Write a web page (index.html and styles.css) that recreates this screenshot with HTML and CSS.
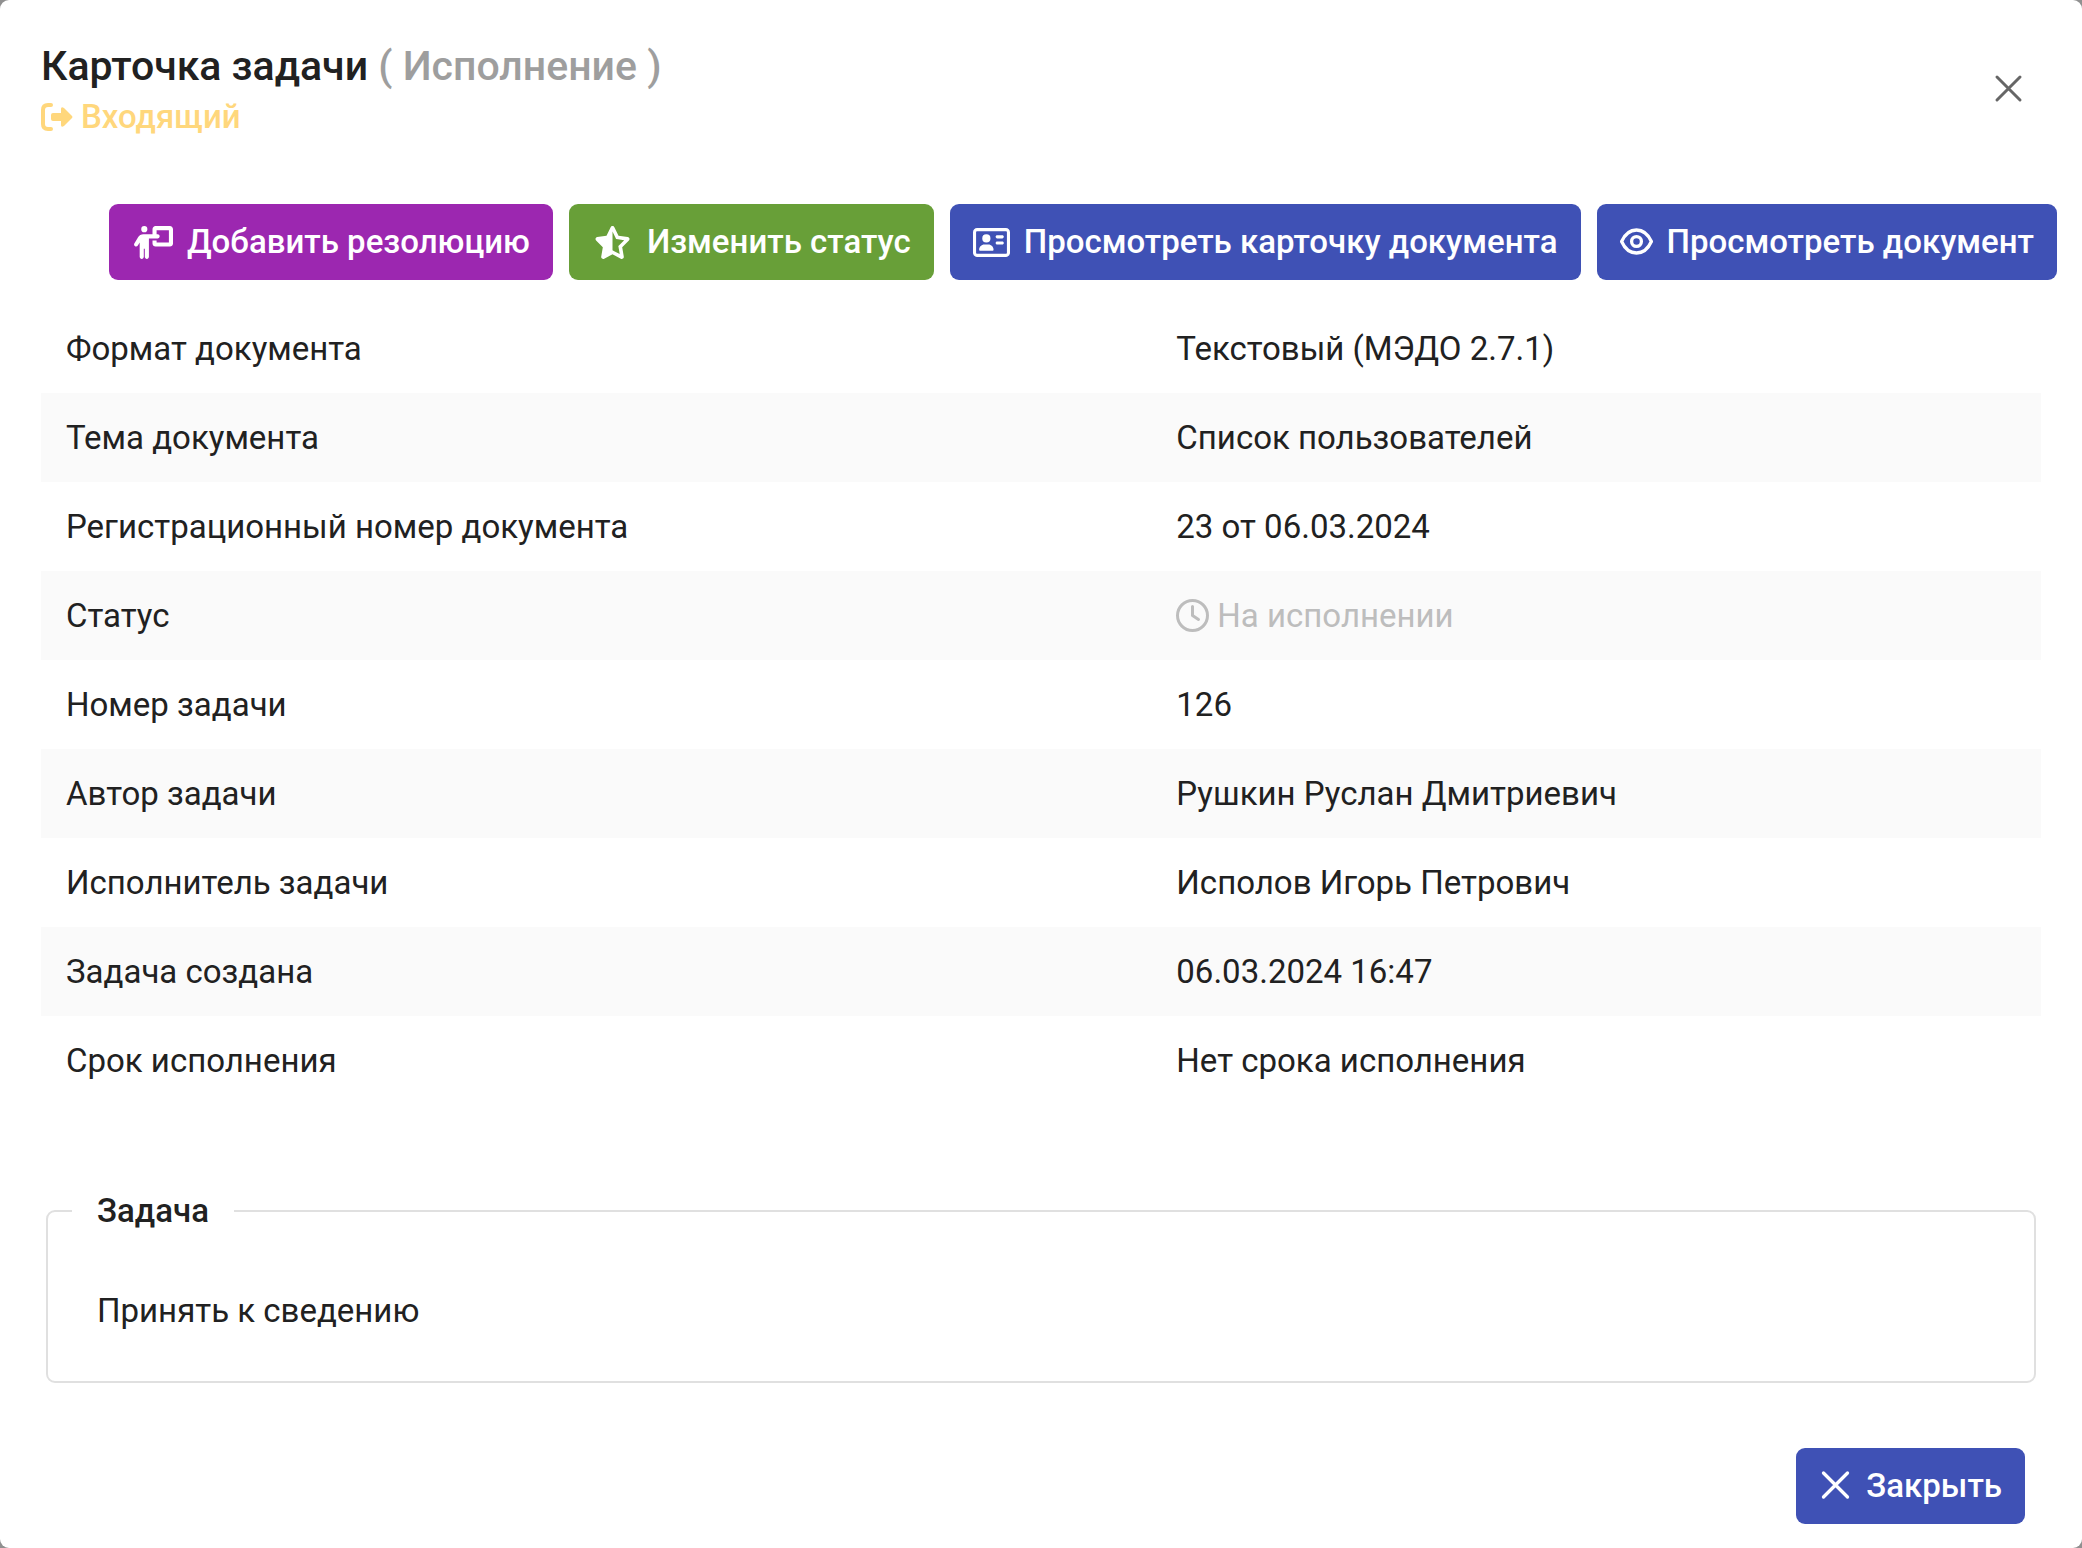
FILE: index.html
```html
<!DOCTYPE html>
<html lang="ru">
<head>
<meta charset="utf-8">
<meta name="viewport" content="width=device-width, initial-scale=1">
<title>Карточка задачи</title>
<link rel="stylesheet" href="styles.css">
</head>
<body>
<main class="dialog" role="dialog" aria-labelledby="dialog-title">
  <header class="dialog-header">
    <div>
      <h1 class="title" id="dialog-title">Карточка задачи <span class="title-kind">( Исполнение )</span></h1>
      <p class="direction">
        <svg class="icon-direction" viewBox="0 0 32 28" aria-hidden="true"><path d="M10 2H7Q2 2 2 7V21Q2 26 7 26H10" fill="none" stroke="currentColor" stroke-width="4" stroke-linecap="round"/><path d="M12 10H20V6Q20 3 23 5L31 13Q32 14 31 15L23 23Q20 25 20 22V18H12Q10 18 10 16V12Q10 10 12 10Z" fill="currentColor"/></svg>
        Входящий
      </p>
    </div>
    <button class="icon-button" type="button" aria-label="Закрыть окно">
      <svg class="icon" viewBox="0 0 33 33" aria-hidden="true"><path d="M5 5L28 28M28 5L5 28" fill="none" stroke="currentColor" stroke-width="3" stroke-linecap="round"/></svg>
    </button>
  </header>

  <div class="toolbar">
    <button class="button button-purple" type="button">
      <svg class="icon icon-wide" viewBox="0 0 640 512" aria-hidden="true"><path fill="currentColor" d="M192 96a48 48 0 1 0 0-96 48 48 0 1 0 0 96zm-8 384V352h16V480c0 17.700 14.300 32 32 32s32-14.300 32-32V192h56 64 16c17.700 0 32-14.300 32-32s-14.300-32-32-32H384V64H576V256H384V224H320v48c0 26.500 21.500 48 48 48H592c26.500 0 48-21.500 48-48V48c0-26.500-21.500-48-48-48H368c-26.500 0-48 21.500-48 48v80H243.100 177.100c-33.700 0-64.900 17.700-82.300 46.600l-58.300 97c-9.100 15.100-4.200 34.800 10.900 43.900s34.800 4.200 43.900-10.900L120 256.900V480c0 17.700 14.300 32 32 32s32-14.300 32-32z"/></svg>
      Добавить резолюцию
    </button>
    <button class="button button-green" type="button">
      <svg class="icon icon-wide" viewBox="0 0 576 512" aria-hidden="true"><path fill="currentColor" d="M288 376.400l.1-.1 26.400 14.100 85.200 45.500-16.500-97.600-4.800-28.700 20.700-20.500 70.100-69.300-96.100-14.200-29.300-4.300-12.900-26.600L288.100 86.900l-.1 .3V376.400zm175.100 98.300c2 12-3 24.200-12.900 31.300s-23 8-33.800 2.300L288.100 439.800 159.800 508.300C149 514 135.900 513.100 126 506s-14.900-19.300-12.900-31.300L137.800 329 33.600 225.900c-8.600-8.500-11.700-21.200-7.900-32.700s13.700-19.900 25.700-21.700L195 150.300 259.400 18c5.400-11 16.500-18 28.800-18s23.400 7 28.800 18l64.300 132.300 143.600 21.200c12 1.800 22 10.200 25.700 21.700s.7 24.200-7.900 32.700L438.500 329l24.600 145.700z"/></svg>
      Изменить статус
    </button>
    <button class="button" type="button">
      <svg class="icon icon-card" viewBox="0 0 576 512" aria-hidden="true"><path fill="currentColor" d="M512 80c8.800 0 16 7.200 16 16V416c0 8.800-7.200 16-16 16H64c-8.800 0-16-7.200-16-16V96c0-8.800 7.200-16 16-16H512zM64 32C28.700 32 0 60.700 0 96V416c0 35.300 28.700 64 64 64H512c35.300 0 64-28.700 64-64V96c0-35.300-28.700-64-64-64H64zM208 256a64 64 0 1 0 0-128 64 64 0 1 0 0 128zm-32 32c-44.200 0-80 35.800-80 80c0 8.800 7.200 16 16 16H304c8.800 0 16-7.200 16-16c0-44.200-35.800-80-80-80H176zM376 144c-13.300 0-24 10.700-24 24s10.700 24 24 24h80c13.300 0 24-10.700 24-24s-10.700-24-24-24H376zm0 96c-13.300 0-24 10.700-24 24s10.700 24 24 24h80c13.300 0 24-10.700 24-24s-10.700-24-24-24H376z"/></svg>
      Просмотреть карточку документа
    </button>
    <button class="button" type="button">
      <svg class="icon" viewBox="0 0 33 33" aria-hidden="true"><g fill="none" stroke="currentColor" stroke-width="3.300" stroke-linejoin="round"><path d="M1.600 15.500C5 8 10 4 16.500 4S28 8 31.400 15.500C28 23 23 27 16.500 27S5 23 1.600 15.500Z"/><circle cx="16.500" cy="15.500" r="4.900"/></g></svg>
      Просмотреть документ
    </button>
  </div>

  <table class="details">
    <tbody>
      <tr><th scope="row">Формат документа</th><td>Текстовый (МЭДО 2.7.1)</td></tr>
      <tr><th scope="row">Тема документа</th><td>Список пользователей</td></tr>
      <tr><th scope="row">Регистрационный номер документа</th><td>23 от 06.03.2024</td></tr>
      <tr><th scope="row">Статус</th><td><span class="status"><svg class="icon" viewBox="0 0 33 33" aria-hidden="true"><g fill="none" stroke="currentColor" stroke-width="3" stroke-linecap="round" stroke-linejoin="round"><circle cx="16.500" cy="16.500" r="15"/><path d="M16.500 7.500V16.500L22.500 20.500"/></g></svg>На исполнении</span></td></tr>
      <tr><th scope="row">Номер задачи</th><td>126</td></tr>
      <tr><th scope="row">Автор задачи</th><td>Рушкин Руслан Дмитриевич</td></tr>
      <tr><th scope="row">Исполнитель задачи</th><td>Исполов Игорь Петрович</td></tr>
      <tr><th scope="row">Задача создана</th><td>06.03.2024 16:47</td></tr>
      <tr><th scope="row">Срок исполнения</th><td>Нет срока исполнения</td></tr>
    </tbody>
  </table>

  <fieldset class="task">
    <legend>Задача</legend>
    <p class="task-text">Принять к сведению</p>
  </fieldset>

  <footer class="dialog-footer">
    <button class="button" type="button">
      <svg class="icon" viewBox="0 0 33 33" aria-hidden="true"><path d="M4.500 3L28.500 27M28.500 3L4.500 27" fill="none" stroke="currentColor" stroke-width="3.300" stroke-linecap="round"/></svg>
      Закрыть
    </button>
  </footer>
</main>
</body>
</html>
```
FILE: styles.css
```css
* {
  box-sizing: border-box;
}

body {
  margin: 0;
  background: #909090;
  color: #212121;
  font-family: Roboto, "Noto Sans", sans-serif;
  font-size: 33px;
  line-height: 40px;
}

.dialog {
  display: flex;
  flex-direction: column;
  min-height: 100vh;
  background: #fff;
  border-radius: 9px;
}

.dialog-header {
  display: flex;
  justify-content: space-between;
  align-items: flex-start;
  padding: 40px 41px 0;
}

.title {
  margin: 0;
  font-size: 41px;
  font-weight: 500;
  line-height: 52px;
}

.title-kind {
  color: #9e9e9e;
}

.direction {
  display: flex;
  align-items: center;
  gap: 8px;
  margin: 5px 0 0;
  color: #ffd77c;
  font-weight: 500;
}

.icon-direction {
  width: 32px;
  height: 28px;
}

.icon {
  flex: none;
  width: 33px;
  height: 33px;
}

.icon-wide {
  width: 41px;
}

.icon-card {
  width: 37px;
}

.icon-button {
  display: flex;
  margin: 24px 8px 0 0;
  padding: 8px;
  border: 0;
  background: none;
  color: #666;
}

.toolbar {
  display: flex;
  flex-wrap: wrap;
  justify-content: flex-end;
  gap: 16px;
  padding: 67px 25px 24px;
}

.button {
  display: flex;
  align-items: center;
  gap: 14px;
  height: 76px;
  padding: 0 23px;
  border: 0;
  border-radius: 9px;
  background: #3f51b5;
  color: #fff;
  font: inherit;
  font-weight: 500;
}

.button-purple {
  background: #9c27b0;
}

.button-green {
  background: #689f38;
}

.details {
  margin: 0 41px;
  border-collapse: collapse;
}

.details th,
.details td {
  height: 89px;
  padding: 0 25px;
  font-weight: 400;
  text-align: left;
}

.details tr:nth-child(even) {
  background: #fafafa;
}

.status {
  display: flex;
  align-items: center;
  gap: 8px;
  color: #bdbdbd;
}

.task {
  margin: 86px 46px 0;
  padding: 60px 24px 50px;
  border: 2px solid #e0e0e0;
  border-radius: 9px;
}

.task legend {
  padding: 0 25px;
  font-weight: 500;
}

.task-text {
  margin: 0;
  padding: 0 25px;
}

.dialog-footer {
  display: flex;
  justify-content: flex-end;
  margin-top: auto;
  padding: 24px 57px;
}
```
